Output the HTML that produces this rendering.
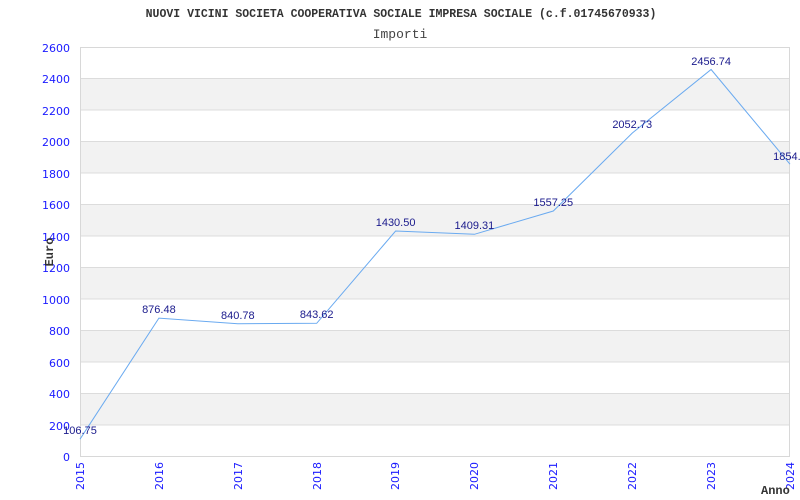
<!DOCTYPE html>
<html><head><meta charset="utf-8"><style>
html,body{margin:0;padding:0;background:#fff;width:800px;height:500px;overflow:hidden}
</style></head><body>
<svg width="800" height="500" xmlns="http://www.w3.org/2000/svg">
<rect width="800" height="500" fill="#fff"/>
<g fill="#f2f2f2">
<rect x="80" y="78.5" width="710" height="31.5"/>
<rect x="80" y="141.5" width="710" height="31.5"/>
<rect x="80" y="204.5" width="710" height="31.5"/>
<rect x="80" y="267.5" width="710" height="31.5"/>
<rect x="80" y="330.5" width="710" height="31.5"/>
<rect x="80" y="393.5" width="710" height="31.5"/>
</g>
<g stroke="#dcdcdc" stroke-width="1">
<line x1="80" x2="790" y1="78.5" y2="78.5"/><line x1="80" x2="790" y1="110" y2="110"/>
<line x1="80" x2="790" y1="141.5" y2="141.5"/><line x1="80" x2="790" y1="173" y2="173"/>
<line x1="80" x2="790" y1="204.5" y2="204.5"/><line x1="80" x2="790" y1="236" y2="236"/>
<line x1="80" x2="790" y1="267.5" y2="267.5"/><line x1="80" x2="790" y1="299" y2="299"/>
<line x1="80" x2="790" y1="330.5" y2="330.5"/><line x1="80" x2="790" y1="362" y2="362"/>
<line x1="80" x2="790" y1="393.5" y2="393.5"/><line x1="80" x2="790" y1="425" y2="425"/>
</g>
<rect x="80.5" y="47.5" width="709" height="409" fill="none" stroke="#d8d8d8"/>
<text x="401" y="17" text-anchor="middle" font-family="'Liberation Mono',monospace" font-weight="bold" font-size="11.5" fill="#333">NUOVI VICINI SOCIETA COOPERATIVA SOCIALE IMPRESA SOCIALE (c.f.01745670933)</text>
<text x="400" y="38" text-anchor="middle" font-family="'Liberation Mono',monospace" font-size="13" fill="#444">Importi</text>
<g font-family="'DejaVu Sans',sans-serif" font-size="11" fill="#1a1aff" text-anchor="end">
<text x="70" y="52">2600</text><text x="70" y="83">2400</text><text x="70" y="115">2200</text>
<text x="70" y="146">2000</text><text x="70" y="178">1800</text><text x="70" y="209">1600</text>
<text x="70" y="241">1400</text><text x="70" y="272">1200</text><text x="70" y="304">1000</text>
<text x="70" y="335">800</text><text x="70" y="367">600</text><text x="70" y="398">400</text>
<text x="70" y="430">200</text><text x="70" y="461">0</text>
</g>
<g font-family="'DejaVu Sans',sans-serif" font-size="11" fill="#1a1aff" text-anchor="end">
<text transform="translate(84,462) rotate(-90)">2015</text>
<text transform="translate(163,462) rotate(-90)">2016</text>
<text transform="translate(242,462) rotate(-90)">2017</text>
<text transform="translate(321,462) rotate(-90)">2018</text>
<text transform="translate(399,462) rotate(-90)">2019</text>
<text transform="translate(478,462) rotate(-90)">2020</text>
<text transform="translate(557,462) rotate(-90)">2021</text>
<text transform="translate(636,462) rotate(-90)">2022</text>
<text transform="translate(715,462) rotate(-90)">2023</text>
<text transform="translate(794,462) rotate(-90)">2024</text>
</g>
<text transform="translate(53,252) rotate(-90)" text-anchor="middle" font-family="'Liberation Mono',monospace" font-weight="bold" font-size="12" fill="#333">Euro</text>
<text x="761" y="494" font-family="'Liberation Mono',monospace" font-weight="bold" font-size="12" fill="#333">Anno</text>
<polyline fill="none" stroke="#6aaaf0" stroke-width="1" points="80,439.2 158.9,318.1 237.8,323.7 316.7,323.3 395.6,231 474.4,234.3 553.3,211 632.2,133.1 711.1,69.5 790,164.2"/>
<g font-family="'Liberation Sans',sans-serif" font-size="11" fill="#1a1a8c" text-anchor="middle">
<text x="80" y="434">106.75</text><text x="158.9" y="313">876.48</text>
<text x="237.8" y="319">840.78</text><text x="316.7" y="318">843.62</text>
<text x="395.6" y="226">1430.50</text><text x="474.4" y="229">1409.31</text>
<text x="553.3" y="206">1557.25</text><text x="632.2" y="128">2052.73</text>
<text x="711.1" y="65">2456.74</text><text x="790" y="160">1854.7</text>
</g>
</svg>
</body></html>
